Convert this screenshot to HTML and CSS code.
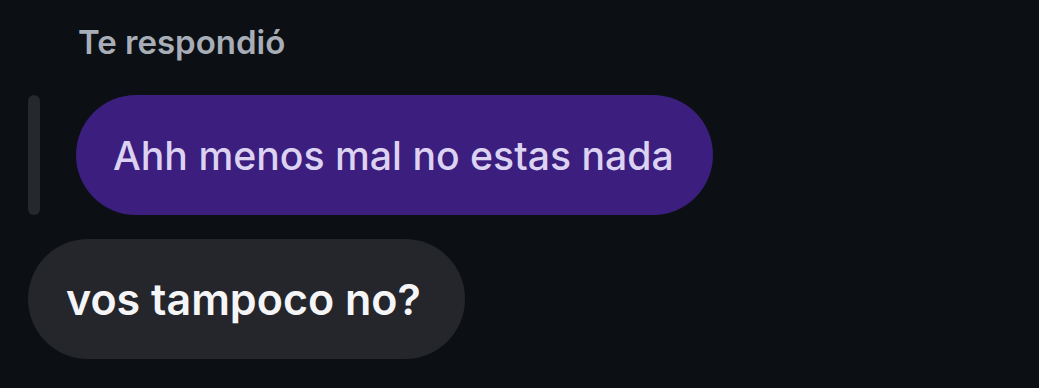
FILE: index.html
```html
<!DOCTYPE html>
<html lang="es">
<head>
    <meta charset="UTF-8">
    <meta name="viewport" content="width=device-width, initial-scale=1.0">
    <title>Respuesta</title>
    <link rel="stylesheet" href="styles.css">
</head>
<body>

    <!-- Chat thread -->
    <div class="thread">
        <div class="reply-label">Te respondió</div>

        <!-- Quoted message -->
        <div class="reply">
            <div class="reply-bar"></div>
            <div class="bubble bubble-quoted">Ahh menos mal no estas nada</div>
        </div>

        <!-- Received message -->
        <div class="bubble bubble-received">vos tampoco no?</div>
    </div>

</body>
</html>
```

FILE: styles.css
```css
body {
    font-family: Inter, "Noto Sans", sans-serif;
    margin: 0;
    padding: 0;
    background-color: #0c1014;
    height: 388px;
    overflow: hidden;
}

.thread {
    display: flex;
    flex-direction: column;
    align-items: flex-start;
    padding-left: 28px;
}

.reply-label {
    color: #a8aeb7;
    font-size: 33px;
    font-weight: 600;
    height: 95px;
    line-height: 84px;
    padding-left: 50px;
}

.reply {
    display: flex;
    gap: 36px;
}

.reply-bar {
    width: 12px;
    height: 120px;
    border-radius: 6px;
    background-color: #26282c;
}

.bubble {
    height: 120px;
    border-radius: 60px;
    display: flex;
    align-items: center;
    font-weight: 500;
    white-space: nowrap;
}

.bubble-quoted {
    background-color: #3b1e7e;
    color: #dcd2f2;
    padding: 0 39px 0 37px;
    font-size: 39.2px;
}

.bubble-received {
    background-color: #24262b;
    color: #f5f5f7;
    margin-top: 24px;
    padding: 0 44px 0 38px;
    font-size: 43px;
    font-weight: 600;
}
```
